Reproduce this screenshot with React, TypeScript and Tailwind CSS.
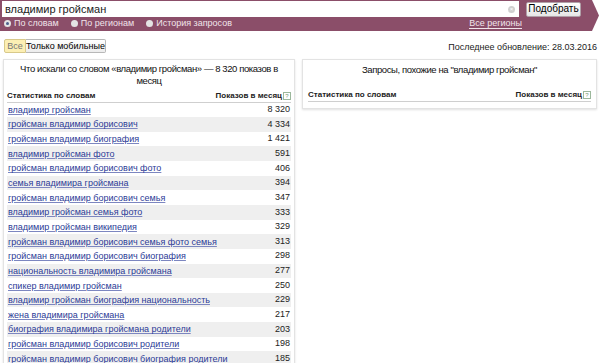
import { Fragment } from 'react';

const rows: [string, string][] = [
  ['владимир гройсман', '8 320'],
  ['гройсман владимир борисович', '4 334'],
  ['гройсман владимир биография', '1 421'],
  ['владимир гройсман фото', '591'],
  ['гройсман владимир борисович фото', '406'],
  ['семья владимира гройсмана', '394'],
  ['гройсман владимир борисович семья', '347'],
  ['владимир гройсман семья фото', '333'],
  ['владимир гройсман википедия', '329'],
  ['гройсман владимир борисович семья фото семья', '313'],
  ['гройсман владимир борисович биография', '298'],
  ['национальность владимира гройсмана', '277'],
  ['спикер владимир гройсман', '250'],
  ['владимир гройсман биография национальность', '229'],
  ['жена владимира гройсмана', '217'],
  ['биография владимира гройсмана родители', '203'],
  ['гройсман владимир борисович родители', '198'],
  ['гройсман владимир борисович биография родители', '185'],
];

function Help() {
  return (
    <span className="ml-[1px] inline-flex h-[8px] w-[8px] items-center justify-center border border-[#9cb89c] text-[6px] font-normal leading-none text-[#7a9a7a]">
      ?
    </span>
  );
}

function TableHead() {
  return (
    <div className="flex items-end justify-between border-b border-[#cfcfcf] pb-[1px] text-[8px] font-bold leading-[10px] text-[#222]">
      <span>Статистика по словам</span>
      <span className="flex items-center">
        Показов в месяц
        <Help />
      </span>
    </div>
  );
}

function Radio({ label, checked }: { label: string; checked?: boolean }) {
  return (
    <span className="flex items-center gap-[3px]">
      <span className="flex h-[7px] w-[7px] items-center justify-center rounded-full bg-[#e4e4e4]">
        {checked && <span className="h-[3px] w-[3px] rounded-full bg-[#4b5f8c]" />}
      </span>
      <span>{label}</span>
    </span>
  );
}

export default function App() {
  return (
    <div className="h-[363px] w-[600px] overflow-hidden bg-white font-['Liberation_Sans',Arial,sans-serif] text-[#222]">
      {/* search bar */}
      <div className="flex h-[31px]">
        <div className="flex flex-1 flex-col bg-[#8b4e69] pl-[2px] pr-[10px] pt-[1px]">
          <div className="flex items-center gap-[7px]">
            <div className="flex h-[16px] flex-1 items-center bg-white pl-[3px] pr-[4px] text-[11px]">
              <span className="flex-1">владимир гройсман</span>
              <span className="flex h-[7px] w-[7px] items-center justify-center rounded-full bg-[#d0d0d0] text-[6px] leading-none text-white">
                ×
              </span>
            </div>
            <button className="h-[15px] w-[55px] rounded-[2px] border border-[#b0a0a8] bg-gradient-to-b from-white to-[#e6e6e6] text-[10px] leading-none text-black">
              Подобрать
            </button>
          </div>
          <div className="flex h-[13px] items-center pr-[59px] text-[9px] text-[#f1e4ea]">
            <div className="flex items-center gap-[12px] pl-[2px]">
              <Radio label="По словам" checked />
              <Radio label="По регионам" />
              <Radio label="История запросов" />
            </div>
            <span className="ml-auto border-b border-[#f1e4ea] leading-[10px]">Все регионы</span>
          </div>
        </div>
        <svg width="9" height="31" viewBox="0 0 9 31" className="shrink-0">
          <polygon points="0,0 1,0 8,15.5 1,31 0,31" fill="#8b4e69" />
        </svg>
      </div>

      {/* filters */}
      <div className="mt-[7px] flex items-center justify-between pl-[4px] pr-[3px]">
        <div className="flex h-[14px] text-[9px]">
          <span className="flex w-[22px] items-center justify-center rounded-l-[2px] border border-[#d8c98a] bg-[#fcefb4] text-[#777]">
            Все
          </span>
          <span className="flex w-[80px] items-center justify-center rounded-r-[2px] border border-l-0 border-[#b8b8b8] bg-gradient-to-b from-white to-[#ececec] text-black">
            Только мобильные
          </span>
        </div>
        <span className="mt-[3px] text-[9px]">Последнее обновление: 28.03.2016</span>
      </div>

      {/* panels */}
      <div className="mt-[4px] flex items-start gap-[7px] pl-[3px] pr-[3px]">
        <div className="w-[292px] border border-[#e3e3e3] px-[3px] pt-[3px] shadow-[0_1px_2px_rgba(0,0,0,0.12)]">
          <div className="whitespace-nowrap text-center text-[9.5px] leading-[12px] tracking-[-0.4px] text-[#111]">
            Что искали со словом «владимир гройсман» — 8 320 показов в
            <br />
            месяц
          </div>
          <div className="mt-[4px]">
            <TableHead />
            <div className="grid grid-cols-[1fr_auto] text-[9px]">
              {rows.map(([q, n], i) => (
                <Fragment key={q}>
                  <div className={`flex h-[14.65px] items-center pl-[1px] ${i % 2 ? 'bg-[#efefef]' : 'bg-white'}`}>
                    <a className="leading-[10px] text-[#2b3a96] underline decoration-[#7c86c0]">{q}</a>
                  </div>
                  <div className={`flex h-[14.65px] items-center justify-end pr-[1px] ${i % 2 ? 'bg-[#efefef]' : 'bg-white'}`}>
                    {n}
                  </div>
                </Fragment>
              ))}
            </div>
          </div>
        </div>

        <div className="flex-1 border border-[#e3e3e3] px-[5px] pb-[6px] pt-[4px] shadow-[0_1px_2px_rgba(0,0,0,0.12)]">
          <div className="text-center text-[9.5px] leading-[12px] tracking-[-0.4px] text-[#111]">
            Запросы, похожие на "владимир гройсман"
          </div>
          <div className="mt-[14px]">
            <TableHead />
          </div>
        </div>
      </div>
    </div>
  );
}
